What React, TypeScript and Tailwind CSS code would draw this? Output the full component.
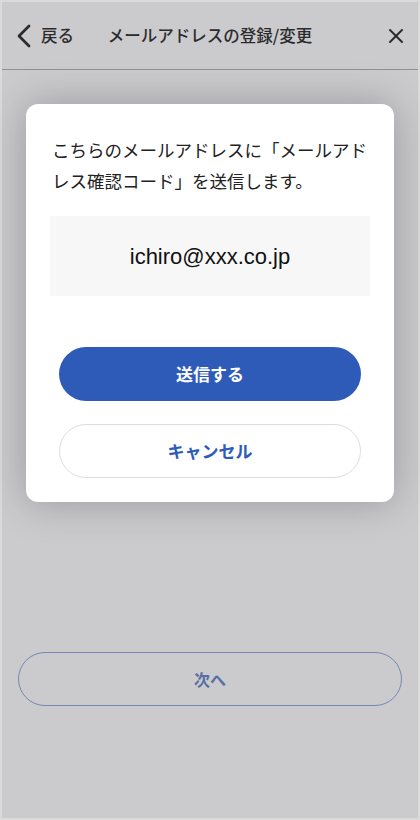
import { X } from 'lucide-react';

const jp = { fontFamily: '"Noto Sans CJK JP", "Noto Sans", sans-serif' };

function Header() {
  return (
    <header className="flex h-[68px] items-center border-b border-[#b4b4b6] pl-[14px] pr-[10px]">
      <button className="flex items-center gap-[9px] text-[#333]">
        <svg width="16" height="24" viewBox="0 0 16 24" fill="none">
          <path d="M13 2 L3 12 L13 22" stroke="currentColor" strokeWidth="2.8" strokeLinecap="round" strokeLinejoin="round" />
        </svg>
        <span className="text-[16.5px] font-medium">戻る</span>
      </button>
      <h1 className="flex-1 pr-[38px] text-center text-[16.5px] font-medium text-[#333]">
        メールアドレスの登録/変更
      </h1>
      <button className="text-[#333]">
        <X className="h-6 w-6" strokeWidth={2} />
      </button>
    </header>
  );
}

export default function App() {
  return (
    <div className="h-[820px] w-[420px] border-2 border-[#dadada] bg-white" style={jp}>
      <div className="relative flex h-full flex-col">
        <Header />
        <div className="flex-1" />
        <div className="px-[16px] pb-[112px]">
          <button className="h-[54px] w-full rounded-full border-[1.5px] border-[#8fa9de] text-[16px] font-bold text-[#6c8acb]">
            次へ
          </button>
        </div>

        {/* overlay + dialog */}
        <div className="absolute inset-0 bg-[rgba(20,20,30,0.22)]">
          <div className="mx-[24px] mt-[102px] rounded-[12px] bg-white px-[24px] pb-[24px] pt-[30px] shadow-[0_0_40px_rgba(0,0,0,0.25)]">
            <p className="px-[2px] text-[17.5px] leading-[31px] text-[#222]">
              こちらのメールアドレスに「メールアドレス確認コード」を送信します。
            </p>
            <div className="mt-[20px] flex h-[80px] items-center justify-center bg-[#f7f7f7]">
              <span
                className="text-[22px] text-[#111]"
                style={{ fontFamily: '"Liberation Sans", "Noto Sans CJK JP", sans-serif' }}
              >
                ichiro@xxx.co.jp
              </span>
            </div>
            <div className="mt-[51px] flex flex-col gap-[23px] px-[9px]">
              <button className="h-[54px] w-full rounded-full bg-[#2e5bb8] text-[17px] font-bold text-white">
                送信する
              </button>
              <button className="h-[54px] w-full rounded-full border border-[#dddddd] bg-white text-[17px] font-bold text-[#2e5bb8]">
                キャンセル
              </button>
            </div>
          </div>
        </div>
      </div>
    </div>
  );
}
